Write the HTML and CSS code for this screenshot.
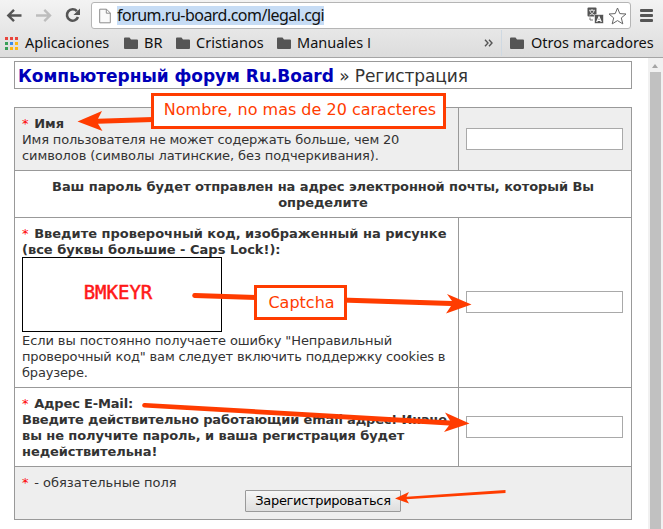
FILE: index.html
```html
<!DOCTYPE html>
<html lang="ru">
<head>
<meta charset="utf-8">
<title>Регистрация</title>
<link rel="stylesheet" href="styles.css">
</head>
<body>
<header class="chrome">
  <div class="toolbar">
    <svg class="nav" width="88" height="30" viewBox="0 0 88 30" fill="none">
      <path d="M21.5 15.5H9M14 9.8L8.3 15.5L14 21.2" stroke="#555" stroke-width="2.4"/>
      <path d="M36 15.5H49M44.3 9.8L50 15.5L44.3 21.2" stroke="#bdbdbd" stroke-width="2.4"/>
      <path d="M76.9 11.2A5.7 5.7 0 1 0 78 17" stroke="#555" stroke-width="2.6"/>
      <path d="M80 8.5V15h-6.5z" fill="#555"/>
    </svg>
    <div class="address">
      <svg class="page-icon" width="12" height="16" viewBox="0 0 12 16"><path d="M.7 1.2h6.8l3.8 3.8v9.8H.7zM7.3 1.2v4h4" fill="#fafafa" stroke="#8c8c8c"/></svg>
      <span class="url">forum.ru-board.com/legal.cgi</span>
      <svg class="translate" width="17" height="17" viewBox="0 0 17 17">
        <rect x=".5" y=".5" width="9" height="9" rx="1" fill="#555"/>
        <path d="M2 3.3h6M5 2v1.3M3 4c.7 2 2.500 3.500 4.500 4M7 4C6.300 6 4.500 7.500 2.500 8" stroke="#eee" fill="none" stroke-width=".9"/>
        <rect x="7.500" y="7.500" width="9" height="9" rx="1" fill="#555" stroke="#fff" stroke-width=".6"/>
        <path d="M9.700 15L12 9.800L14.300 15M10.500 13.300h3" stroke="#fff" fill="none" stroke-width="1.200"/>
        <path d="M3 10.500v2.500h3" stroke="#777" fill="none"/>
      </svg>
      <svg class="star" width="19" height="18" viewBox="0 0 19 18"><path d="M9.500 1l2.300 5.600 6.200.4-4.700 3.900 1.500 6-5.300-3.300-5.300 3.300 1.500-6L1 7l6.200-.4z" fill="#fff" stroke="#666" stroke-linejoin="round"/></svg>
    </div>
    <div class="menu"><i></i><i></i><i></i></div>
  </div>
  <nav class="bookmarks">
    <span class="apps"><i class="r"></i><i class="r"></i><i class="r"></i><i class="g"></i><i class="b"></i><i class="y"></i><i class="g"></i><i class="y"></i><i class="y"></i></span>
    <span class="label apps-label">Aplicaciones</span>
    <svg class="folder" width="14" height="12" viewBox="0 0 14 12"><path d="M1 .5h4.500l1.500 2h6q1 0 1 1V11q0 1-1 1H1q-1 0-1-1V1.500q0-1 1-1z" fill="#555"/></svg>
    <span class="label br-label">BR</span>
    <svg class="folder" width="14" height="12" viewBox="0 0 14 12"><path d="M1 .5h4.500l1.500 2h6q1 0 1 1V11q0 1-1 1H1q-1 0-1-1V1.500q0-1 1-1z" fill="#555"/></svg>
    <span class="label cr-label">Cristianos</span>
    <svg class="folder" width="14" height="12" viewBox="0 0 14 12"><path d="M1 .5h4.500l1.500 2h6q1 0 1 1V11q0 1-1 1H1q-1 0-1-1V1.500q0-1 1-1z" fill="#555"/></svg>
    <span class="label ma-label">Manuales <span class="numeral">I</span></span>
    <svg class="more" width="9" height="8" viewBox="0 0 9 8"><path d="M1 .7L4 4L1 7.300M5 .7L8 4L5 7.300" fill="none" stroke="#555" stroke-width="1.400"/></svg>
    <span class="divider"></span>
    <svg class="folder" width="14" height="12" viewBox="0 0 14 12"><path d="M1 .5h4.500l1.500 2h6q1 0 1 1V11q0 1-1 1H1q-1 0-1-1V1.500q0-1 1-1z" fill="#555"/></svg>
    <span class="label ot-label">Otros marcadores</span>
  </nav>
</header>
<div class="viewport">
  <main class="page">
    <h1 class="title"><b>Компьютерный форум Ru.Board</b> » Регистрация</h1>
    <form class="form">
      <div class="cell shade"><span class="req">*</span> <b>Имя</b><br><span class="tight">Имя пользователя не может содержать больше, чем 20</span><br><span class="snug">символов (символы латинские, без подчеркивания).</span></div>
      <div class="cell field shade"><input type="text"></div>
      <div class="cell wide notice snug">Ваш пароль будет отправлен на адрес электронной почты, который Вы<br>определите</div>
      <div class="cell"><span class="req">*</span> <b>Введите проверочный код, изображенный на рисунке<br>(все буквы большие - Caps Lock!):</b>
        <div class="code">BMKEYR</div><span class="snug">Если вы постоянно получаете ошибку "Неправильный</span><br><span class="tight">проверочный код" вам следует включить поддержку cookies в<br>браузере.</span></div>
      <div class="cell field"><input type="text"></div>
      <div class="cell"><span class="req">*</span> <b><span class="tight">Адрес E-Mail:</span><br><span class="tight">Введите действительно работающий email адрес! Иначе</span><br><span class="snug">вы не получите пароль, и ваша регистрация будет<br>недействительна!</span></b></div>
      <div class="cell field"><input type="text"></div>
      <div class="cell wide shade last"><span class="req">*</span> - обязательные поля<div class="submit"><button type="button">Зарегистрироваться</button></div></div>
    </form>
  </main>
  <div class="scrollbar"><span class="up"></span><span class="thumb"></span></div>
</div>
<svg class="arrows" width="663" height="529" viewBox="0 0 663 529" fill="#ff3c00">
  <path d="M153 117L153 122L98 123.800L102.500 131L77.500 121.500L102 111L98 118.800z"/>
  <path d="M195 293L452 301L447 294L471.500 304.500L446 313.500L451 306L194.500 298a2.400 2.400 0 0 1 .5-5z"/>
  <path d="M145 403L450 420.500L445 412.500L469.500 423.500L444 432L449 425.500L144 407.500a2.300 2.300 0 0 1 1-4.500z"/>
  <path d="M505.500 490V493L406.500 499.300L409 503.500L395 498.500L409 492L406.500 496.700z"/>
</svg>
<div class="note note-name">Nombre, no mas de 20 caracteres</div>
<div class="note note-code">Captcha</div>
</body>
</html>
```
FILE: styles.css
```css
* { box-sizing: border-box; }
body {
  margin: 0;
  width: 663px;
  height: 529px;
  overflow: hidden;
  position: relative;
  display: flex;
  flex-direction: column;
  background: #fff;
  color: #333;
  font: 13px/16px "DejaVu Sans", sans-serif;
  white-space: nowrap;
}
.chrome {
  height: 58px;
  flex: none;
  background: linear-gradient(#f3f3f3, #dcdcdc);
  border-bottom: 1px solid #a5a5a5;
  color: #111;
  font-family: "Noto Sans", sans-serif;
}
.toolbar { display: flex; height: 30px; }
.nav { flex: none; margin-right: 3px; }
.address {
  display: flex;
  align-items: center;
  width: 540px;
  height: 27px;
  margin-top: 2px;
  padding: 0 3px 0 7px;
  background: #fff;
  border: 1px solid #b5b5b5;
  border-radius: 3px;
}
.url {
  width: 207px;
  height: 19px;
  margin-left: 6px;
  background: #c6dcf5;
  font-size: 16px;
  line-height: 18px;
  letter-spacing: -.52px;
}
.translate { margin-left: auto; }
.star { margin-left: 4px; }
.menu { display: flex; flex-direction: column; gap: 2px; margin: 9px 0 0 9px; }
.menu i { width: 13px; height: 3px; border-radius: 1px; background: #555; }
.bookmarks { display: flex; align-items: center; height: 26px; padding-left: 5px; }
.apps { display: grid; grid-template-columns: repeat(3, 3px); grid-auto-rows: 3px; gap: 2px; margin-right: 7px; }
.r { background: #e8453c; }
.g { background: #3a9f58; }
.b { background: #3b8beb; }
.y { background: #fdb713; }
.label { font-size: 14.5px; line-height: 20px; margin: -2px 0 0 7px; }
.apps-label { width: 99px; margin-left: 0; }
.br-label { width: 32px; margin-left: 6px; }
.cr-label { width: 81px; margin-left: 6px; }
.ma-label { width: 187px; margin-left: 6px; }
.numeral { font-family: "Open Sans", sans-serif; }
.divider { width: 1px; height: 26px; background: #cfd9e2; margin: 0 8px; }
.folder, .more { flex: none; }
.viewport { flex: 1; min-height: 0; display: flex; }
.page { flex: 1; padding: 3px 16px 0 14px; }
.title {
  height: 28px;
  margin: 0 0 18px;
  padding-left: 3px;
  border: 1px solid #999;
  font-size: 17px;
  line-height: 28px;
  font-weight: normal;
  letter-spacing: -.08px;
}
.title b { color: #0000b8; letter-spacing: -.04px; }
.form {
  display: grid;
  grid-template-columns: 444px 173px;
  width: 618px;
  border: solid #999;
  border-width: 1px 0 0 1px;
}
.cell { padding: 8px 7px 6px; border: solid #999; border-width: 0 1px 1px 0; }
.last { padding-bottom: 7px; }
.shade { background: #eee; }
.wide { grid-column: span 2; }
.tight { letter-spacing: -.17px; }
.snug { letter-spacing: -.08px; }
.field { display: flex; align-items: center; padding: 7px; }
.field input { width: 157px; height: 22px; margin-top: -1px; border: 1px solid #a9a9a9; background: #fff; padding: 0; }
.notice { text-align: center; font-weight: bold; }
.req { color: #f00; letter-spacing: 1.5px; }
.code {
  width: 200px;
  height: 75px;
  margin: -1px 0 1px;
  border: 1px solid #000;
  color: #ff1818;
  font: 19px/69px "DejaVu Sans Mono", monospace;
  -webkit-text-stroke: .5px #ff1818;
  text-align: center;
  padding-right: 8px;
}
.submit { display: flex; justify-content: center; height: 22px; margin-top: -1px; }
.submit button {
  width: 156px;
  height: 22px;
  padding: 0;
  border: 1px solid #999;
  border-radius: 1px;
  background: linear-gradient(#f6f6f6, #dedede);
  color: #000;
  font: 13px/20px "DejaVu Sans", sans-serif;
  letter-spacing: -.33px;
}
.scrollbar { width: 15px; background: #f1f1f1; display: flex; flex-direction: column; padding: 6px 2px 0; }
.up { width: 0; border: solid transparent; border-width: 0 3.5px 4px; border-bottom-color: #a5a5a5; margin: 0 2px 4px; }
.thumb { flex: 1; width: 11px; background: #c1c1c1; }
.arrows { position: absolute; left: 0; top: 0; }
.note { position: absolute; background: #fff; border: 3px solid #ff3c00; color: #ff3c00; font-size: 16px; text-align: center; }
.note-name { left: 151px; top: 93px; width: 295px; height: 36px; line-height: 28px; padding-left: 3px; }
.note-code { left: 254px; top: 285px; width: 93px; height: 35px; line-height: 29px; padding-left: 2px; }
```
